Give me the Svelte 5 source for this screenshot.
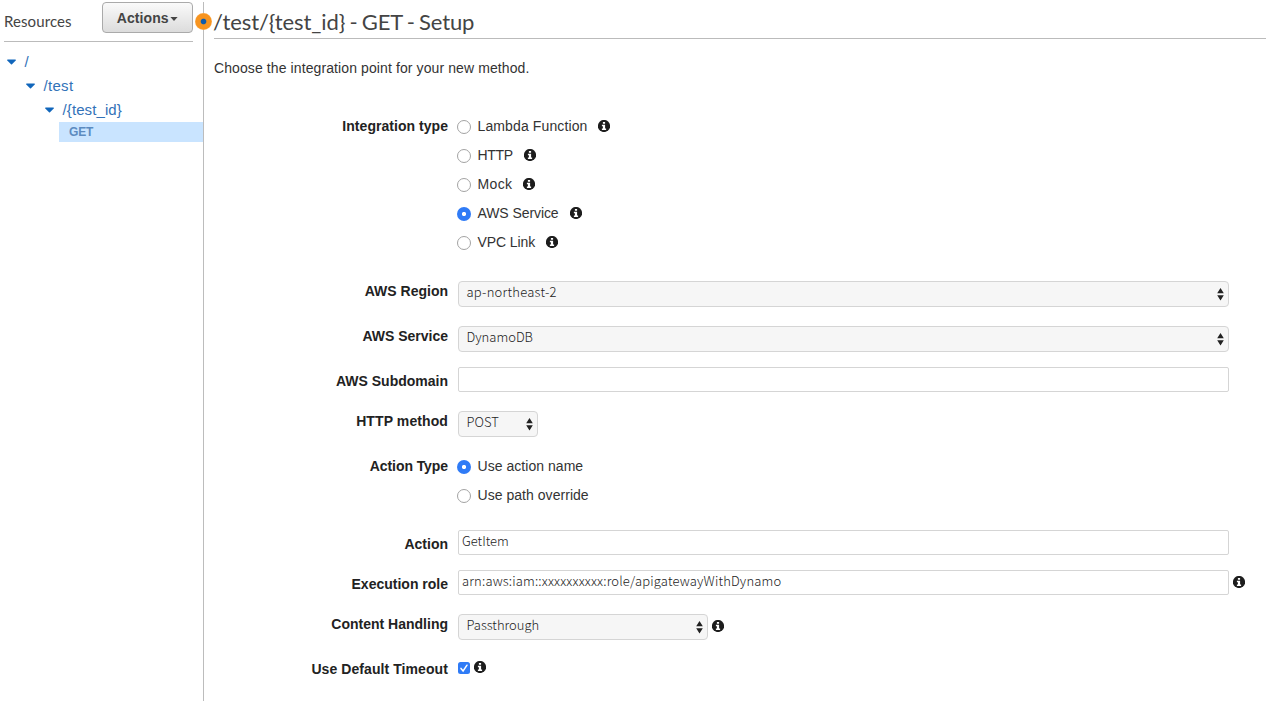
<script>
  let integration = $state('AWS Service');
  let actionType = $state('Use action name');
  const integrations = [
    { name: 'Lambda Function', ls: 0.12 },
    { name: 'HTTP', ls: -0.3 },
    { name: 'Mock', ls: 0.35 },
    { name: 'AWS Service', ls: -0.08 },
    { name: 'VPC Link', ls: -0.1 }
  ];
  const actionTypes = ['Use action name', 'Use path override'];
</script>

{#snippet info()}
  <svg class="info" width="12" height="12" viewBox="0 0 12 12" aria-label="Info">
    <circle cx="6" cy="6" r="6.100" fill="#1d1d1d" />
    <path d="M4.900 1.900h2.200v1.800H4.900zM3.900 4.800h3.200v3.700h1V10H3.900V8.500h1V6.200h-1z" fill="#fff" />
  </svg>
{/snippet}

{#snippet updown()}
  <svg class="updown" width="7" height="13" viewBox="0 0 7 13">
    <path d="M3.500 0L6.800 5.200H.2zM3.500 12.400L6.800 7.200H.2z" fill="#222" />
  </svg>
{/snippet}

{#snippet caret()}
  <svg class="caret" width="9" height="6" viewBox="0 0 9 6"><path d="M0 1.200Q0 .6 .8 .6H8.200Q9 .6 9 1.200L5 5.200Q4.500 5.600 4 5.200z" fill="#1166bb" /></svg>
{/snippet}

<div class="page">
  <aside>
    <header class="side-head">
      <span class="resources">Resources</span>
      <button class="actions"><span>Actions</span><svg width="8" height="4" viewBox="0 0 8 4"><path d="M.4 0h7.200L4 4z" fill="#444" /></svg></button>
    </header>
    <nav>
      <div class="node">{@render caret()}<span>/</span></div>
      <div class="node l1">{@render caret()}<span class="test">/test</span></div>
      <div class="node l2">{@render caret()}<span class="tid">/&#123;test_id&#125;</span></div>
      <div class="method">GET</div>
    </nav>
    <div class="divider"></div>
    <span class="handle"></span>
  </aside>

  <main>
    <h1><span>/test/&#123;test_id&#125; - GET - Setup</span></h1>
    <p>Choose the integration point for your new method.</p>

    <div class="row integration">
      <span class="label" style:letter-spacing="0.04px">Integration type</span>
      <div class="options">
        {#each integrations as it}
          <div class="option">
            <span class="radio" class:on={integration === it.name}></span>
            <span class="text" style:letter-spacing="{it.ls}px">{it.name}</span>
            {@render info()}
          </div>
        {/each}
      </div>
    </div>

    <div class="row h45">
      <span class="label">AWS Region</span>
      <div class="select"><span style:letter-spacing="0.25px">ap-northeast-2</span>{@render updown()}</div>
    </div>
    <div class="row h41">
      <span class="label">AWS Service</span>
      <div class="select"><span>DynamoDB</span>{@render updown()}</div>
    </div>
    <div class="row h44">
      <span class="label low">AWS Subdomain</span>
      <div class="input"></div>
    </div>
    <div class="row h41">
      <span class="label" style:letter-spacing="0.1px">HTTP method</span>
      <div class="select post"><span>POST</span>{@render updown()}</div>
    </div>
    <div class="row types">
      <span class="label typelabel" style:letter-spacing="-0.08px">Action Type</span>
      <div class="options">
        {#each actionTypes as name}
          <div class="option">
            <span class="radio" class:on={actionType === name}></span>
            <span class="text" style:letter-spacing="0.04px">{name}</span>
          </div>
        {/each}
      </div>
    </div>
    <div class="row h40">
      <span class="label low">Action</span>
      <div class="input"><span>GetItem</span></div>
    </div>
    <div class="row h44">
      <span class="label low">Execution role</span>
      <div class="input"><span class="arn">arn:aws:iam::xxxxxxxxxx:role/apigatewayWithDynamo</span></div>
      {@render info()}
    </div>
    <div class="row h45">
      <span class="label">Content Handling</span>
      <div class="select pass"><span>Passthrough</span>{@render updown()}</div>
      {@render info()}
    </div>
    <div class="row timeout">
      <span class="label" style:letter-spacing="0.08px">Use Default Timeout</span>
      <svg class="check" width="12" height="12" viewBox="0 0 12 12">
        <rect width="12" height="12" rx="2.500" fill="#2f7bf6" />
        <path d="M3 6.400L5.100 8.900L9 3.200" fill="none" stroke="#fff" stroke-width="1.500" stroke-linecap="round" />
      </svg>
      {@render info()}
    </div>
  </main>
</div>

<style>
  :global(body) { background: #fff; overflow: hidden; }
  .page {
    display: flex;
    width: 1266px;
    height: 701px;
    overflow: hidden;
    font-family: "Liberation Sans", Arial, sans-serif;
    font-size: 14px;
    color: #222;
  }
  .page * { box-sizing: border-box; }
  svg { display: block; flex: none; }
  span { white-space: nowrap; }
  aside { position: relative; width: 204px; flex: none; }
  .divider { position: absolute; left: 203px; top: 2px; width: 1px; height: 699px; background: #bcbcbc; }
  .handle {
    position: absolute; left: 195px; top: 13px; width: 17px; height: 17px;
    border-radius: 50%;
    background: radial-gradient(circle, #0d5cae 0 2.300px, #f7941f 3.300px 7.500px, #fbb057 8.500px);
  }
  .side-head {
    display: flex; justify-content: space-between; align-items: flex-start;
    height: 42px; margin: 0 11px 0 4px; padding-top: 2px;
    border-bottom: 1px solid #bbb;
  }
  .resources { font: 15px/20px Lato, sans-serif; margin-top: 9px; color: #444; letter-spacing: .1px; }
  .actions {
    display: flex; align-items: center; justify-content: center; gap: 1.500px;
    width: 91px; height: 31px; padding: 0;
    border: 1px solid #aaa; border-radius: 4px;
    background: linear-gradient(#fafafa, #dcdcdc);
    font: bold 14px/20px "Liberation Sans", Arial, sans-serif; color: #444;
  }
  .actions span { letter-spacing: .1px; }
  .actions svg { margin-top: 3px; }
  nav { padding-top: 8px; }
  .node { display: flex; align-items: center; height: 24px; padding-left: 6.500px; color: #3272b8; font-size: 15px; }
  .node span { margin: -2px 0 0 9px; }
  .node span.tid { letter-spacing: .1px; }
  .node span.test { letter-spacing: .3px; }
  .node.l1 { padding-left: 25.500px; }
  .node.l2 { padding-left: 44.500px; }
  .method {
    margin-left: 59px; height: 20px; padding-left: 10px; width: 144px;
    background: #c9e4ff; color: #5c8bc0; font: bold 12px/20px "Liberation Sans", Arial, sans-serif;
    letter-spacing: -.2px;
  }
  main { flex: 1; padding-left: 10px; min-width: 0; }
  h1 {
    margin: 0; height: 39px; padding-top: 7px; border-bottom: 1px solid #bbb;
    font: 400 22px/30px Lato, sans-serif; color: #444; letter-spacing: -.11px; word-spacing: -1.300px;
  }
  h1 span { margin-left: -1px; }
  p { margin: 19px 0 0; height: 54px; line-height: 20px; color: #333; letter-spacing: .1px; }
  .row { display: flex; align-items: flex-start; }
  .label {
    width: 234px; margin-right: 10px; flex: none; text-align: right;
    font-weight: bold; line-height: 20px; color: #222;
  }
  .low { padding-top: 4px; }
  .integration { height: 169px; }
  .integration .label { margin-top: 4px; }
  .option { display: flex; align-items: center; height: 29px; margin-left: -1px; }
  .radio { width: 14px; height: 14px; margin: 1px 6.500px 0 0; border: 1px solid #a3a3a3; border-radius: 50%; }
  .radio.on { border: 0; background: radial-gradient(circle, #fff 0 1.700px, #2f7bf6 2.500px); }
  .text { color: #333; margin-top: -2px; }
  .option .info { margin: -2px 0 0 11px; }
  .h40 { height: 40px; }
  .h41 { height: 41px; }
  .h44 { height: 44px; }
  .h45 { height: 45px; }
  .types { height: 78px; }
  .typelabel { padding-top: 4px; }
  .select, .input {
    display: flex; justify-content: space-between; width: 771px; height: 26px;
    border: 1px solid #d5d5d5; border-radius: 4px; background: #f6f6f6;
    padding: 0 4px 0 7.500px;
    font: 300 13px/20px "Noto Sans CJK KR", sans-serif; color: #222;
  }
  .input { height: 25px; border-radius: 2px; background: #fff; padding-left: 3px; }
  .arn { letter-spacing: .165px; }
  .select .updown { margin-top: 6px; }
  .post { width: 80px; }
  .pass { width: 250px; }
  .row > .info { margin: 6px 0 0 3.500px; }
  .timeout .check { margin-top: 3px; }
  .timeout > .info { margin-top: 2px; }
</style>
